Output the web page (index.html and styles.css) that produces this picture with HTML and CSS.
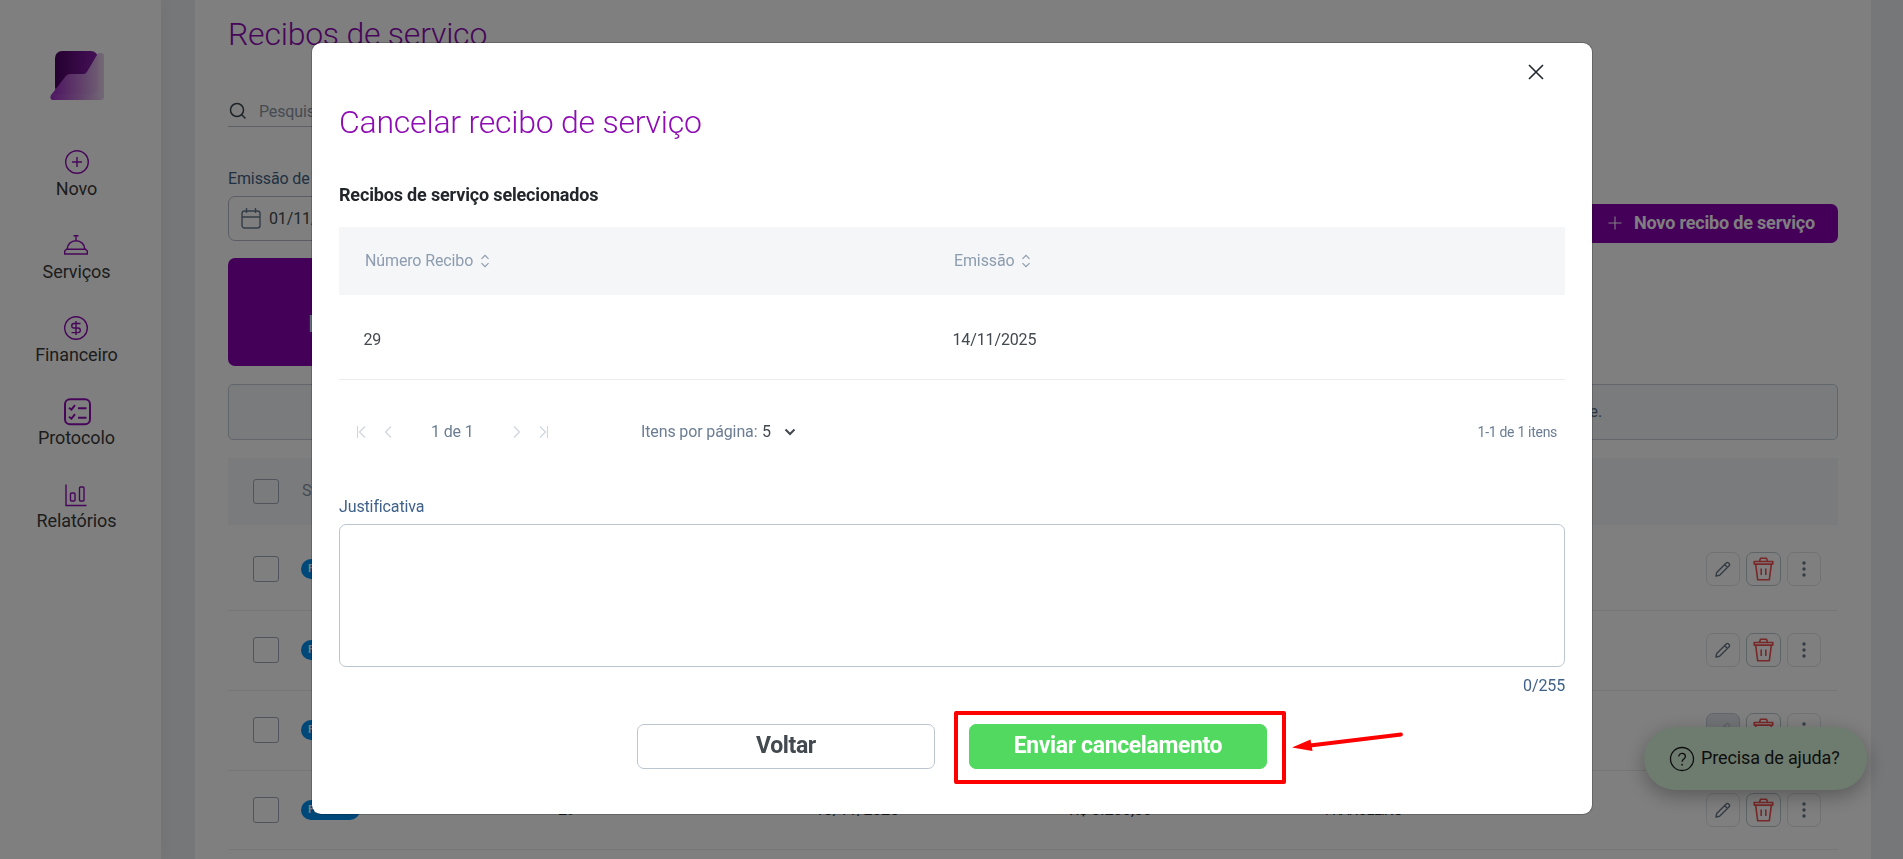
FILE: index.html
```html
<!DOCTYPE html>
<html lang="pt-BR">
<head>
<meta charset="utf-8">
<title>Recibos de serviço</title>
<link rel="stylesheet" href="styles.css">
</head>
<body>
<svg width="0" height="0" class="sprite">
  <symbol id="pencil" viewBox="0 0 16 16"><path d="M1 15l.7-3.6L11.2 1.9a1.6 1.6 0 0 1 2.3 0l.6.6a1.6 1.6 0 0 1 0 2.3L4.6 14.3zM9.6 3.6l2.8 2.8" fill="none" stroke="currentColor" stroke-width="1.4" stroke-linejoin="round"/></symbol>
  <symbol id="trash" viewBox="0 0 21 24"><path d="M1.2 4.5h18.600v2.600H1.200zM6.500 4.300l1-3h6l1 3M2.700 7.300l2 15.500h11.600l2-15.500M8.200 11.500v6.500M12.800 11.500v6.500" fill="none" stroke="currentColor" stroke-width="1.600" stroke-linejoin="round"/></symbol>
  <symbol id="dots" viewBox="0 0 4 16"><g fill="currentColor"><circle cx="2" cy="2" r="1.700"/><circle cx="2" cy="8" r="1.700"/><circle cx="2" cy="14" r="1.700"/></g></symbol>
  <symbol id="sort" viewBox="0 0 10 14"><path d="M1.500 4.800L5 1.300l3.500 3.500M1.500 9.200L5 12.700l3.500-3.500" fill="none" stroke="currentColor" stroke-width="1.200"/></symbol>
</svg>

<div class="app">
  <nav class="sidebar">
    <svg class="logo" width="54" height="51" viewBox="0 0 54 51">
      <defs>
        <linearGradient id="lg1" x1="0" x2="1"><stop offset="0" stop-color="#4a0060"/><stop offset="1" stop-color="#8a22ae"/></linearGradient>
        <linearGradient id="lg2" x1="0" x2="1"><stop offset="0" stop-color="#a030c8"/><stop offset=".5" stop-color="#c07ad4"/><stop offset="1" stop-color="#e6d2ec"/></linearGradient>
        <linearGradient id="lg3" x1="0" x2="1"><stop offset="0" stop-color="#9a2cc0"/><stop offset="1" stop-color="#d8b0e2"/></linearGradient>
      </defs>
      <rect x="5" y="1" width="43" height="43" rx="7" fill="url(#lg1)"/>
      <path d="M50 3h1q3 0 3 3v41q0 3-3 3H4Q-1 50 1 45L16 26q2-2 4-2h14q2 0 3-2L47 5q1-2 3-2z" fill="url(#lg2)"/>
      <path d="M47 6q1 1 1 3v28q0 7-7 7H5V41L16 26q2-2 4-2h14q2 0 3-2z" fill="url(#lg3)" opacity=".55"/>
    </svg>
    <a class="nav-item"><svg class="nav-icon" viewBox="0 0 28 28"><g fill="none" stroke="currentColor" stroke-width="1.400"><circle cx="14" cy="14" r="11.300"/><path d="M14 9v10M9 14h10"/></g></svg><span>Novo</span></a>
    <a class="nav-item"><svg class="nav-icon" viewBox="0 0 28 28"><g fill="none" stroke="currentColor" stroke-width="1.400"><path d="M5.200 18a8.800 8.300 0 0 1 17.600 0M14 9.700V5M11.500 4.800h5M4.500 18.300h19L25.300 20v3H2.700v-3z"/></g></svg><span>Serviços</span></a>
    <a class="nav-item"><svg class="nav-icon" viewBox="0 0 28 28"><g fill="none" stroke="currentColor" stroke-width="1.400"><circle cx="14" cy="14" r="11.300"/><path d="M18.500 9.500h-6.500a2.200 2.200 0 0 0 0 4.500h4a2.300 2.300 0 0 1 0 4.600H9.500M14 7v14"/></g></svg><span>Financeiro</span></a>
    <a class="nav-item"><svg class="nav-icon" viewBox="0 0 28 28"><g fill="none" stroke="currentColor" stroke-width="2"><rect x="2" y="1.200" width="25" height="25" rx="5"/><path d="M6 9.700l2.500 2L12 7.200M15 10.200h8.500M6 18.700l2.500 2L12 16.200M15 19.700h8.500"/></g></svg><span>Protocolo</span></a>
    <a class="nav-item"><svg class="nav-icon" viewBox="0 0 28 28"><g fill="none" stroke="currentColor" stroke-width="1.400"><path d="M4 3.500v21h20.500"/><rect x="8.500" y="12" width="4.500" height="8" rx="1"/><rect x="17.500" y="6" width="4.500" height="14" rx="1"/></g></svg><span>Relatórios</span></a>
  </nav>

  <main class="page">
    <h1 class="page-title">Recibos de serviço</h1>
    <div class="search">
      <svg width="18" height="18" viewBox="0 0 18 18"><g fill="none" stroke="currentColor" stroke-width="1.500"><circle cx="8" cy="8" r="6.500"/><path d="M12.500 12.500l4 4"/></g></svg>
      <span>Pesquisar</span>
    </div>
    <div class="filters">
      <div class="field">
        <span class="field-label">Emissão de</span>
        <div class="date-input">
          <svg width="20" height="21" viewBox="0 0 20 21"><g fill="none" stroke="currentColor" stroke-width="1.400"><rect x="1" y="3" width="18" height="17" rx="2.500"/><path d="M1 9h18M5.500 0v5M14.500 0v5"/></g></svg>
          <span>01/11/2025</span>
        </div>
      </div>
      <button class="new-button"><svg width="14" height="14" viewBox="0 0 14 14"><path d="M7 .5v13M.5 7h13" stroke="currentColor" stroke-width="1.100"/></svg>Novo recibo de serviço</button>
    </div>
    <div class="summary">Recibos</div>
    <div class="notice">Selecione os recibos que deseje.</div>
    <div class="grid-head"><i class="check"></i><span>Status</span></div>
    <div class="grid-row"><i class="check"></i><span class="pill">Faturado</span><span class="c1">32</span><span class="c2">14/11/2025</span><span class="c3">R$ 1.200,00</span><span class="c4">FRANCELINO</span><span class="actions"><b class="act"><svg width="16" height="16"><use href="#pencil"/></svg></b><b class="act del"><svg width="21" height="24"><use href="#trash"/></svg></b><b class="act"><svg width="4" height="16"><use href="#dots"/></svg></b></span></div>
    <div class="grid-row"><i class="check"></i><span class="pill">Faturado</span><span class="c1">31</span><span class="c2">14/11/2025</span><span class="c3">R$ 1.200,00</span><span class="c4">FRANCELINO</span><span class="actions"><b class="act"><svg width="16" height="16"><use href="#pencil"/></svg></b><b class="act del"><svg width="21" height="24"><use href="#trash"/></svg></b><b class="act"><svg width="4" height="16"><use href="#dots"/></svg></b></span></div>
    <div class="grid-row"><i class="check"></i><span class="pill">Faturado</span><span class="c1">30</span><span class="c2">14/11/2025</span><span class="c3">R$ 1.200,00</span><span class="c4">FRANCELINO</span><span class="actions"><b class="act off"><svg width="16" height="16"><use href="#pencil"/></svg></b><b class="act del"><svg width="21" height="24"><use href="#trash"/></svg></b><b class="act"><svg width="4" height="16"><use href="#dots"/></svg></b></span></div>
    <div class="grid-row last"><i class="check"></i><span class="pill">Faturado</span><span class="c1">29</span><span class="c2">13/11/2025</span><span class="c3">R$ 3.200,00</span><span class="c4">FRANCELINO</span><span class="actions"><b class="act"><svg width="16" height="16"><use href="#pencil"/></svg></b><b class="act del"><svg width="21" height="24"><use href="#trash"/></svg></b><b class="act"><svg width="4" height="16"><use href="#dots"/></svg></b></span></div>
  </main>
</div>

<div class="help">
  <svg width="26" height="26" viewBox="0 0 26 26"><g fill="none" stroke="currentColor" stroke-width="1.300"><circle cx="13" cy="13" r="11.500"/><path d="M9.800 10.500c0-4.200 6.600-4.200 6.600 0 0 2.500-3.300 2.500-3.300 5.300"/></g><circle cx="13.100" cy="18.700" r=".9" fill="currentColor"/></svg>
  <span>Precisa de ajuda?</span>
</div>

<div class="backdrop">
  <section class="modal">
    <svg class="close" width="16" height="16" viewBox="0 0 16 16"><path d="M1 1l14 14M15 1L1 15" stroke="currentColor" stroke-width="1.600"/></svg>
    <h2 class="modal-title">Cancelar recibo de serviço</h2>
    <h3 class="subtitle">Recibos de serviço selecionados</h3>
    <div class="thead"><span class="th">Número Recibo<svg width="10" height="14"><use href="#sort"/></svg></span><span class="th">Emissão<svg width="10" height="14"><use href="#sort"/></svg></span></div>
    <div class="trow"><span>29</span><span>14/11/2025</span></div>
    <div class="pager">
      <svg class="arrows" width="38" height="12" viewBox="0 0 38 12"><path d="M1.500 0v12M9 .5L3.500 6 9 11.500M35 .5L29.500 6l5.500 5.500" fill="none" stroke="currentColor" stroke-width="1.100"/></svg>
      <span class="pages">1 de 1</span>
      <svg class="arrows" width="38" height="12" viewBox="0 0 38 12"><path d="M36.500 0v12M29 .5L34.500 6 29 11.500M3 .5L8.500 6 3 11.500" fill="none" stroke="currentColor" stroke-width="1.100"/></svg>
      <span class="per">Itens por página:</span><span class="size">5</span>
      <svg class="chev" width="12" height="8" viewBox="0 0 12 8"><path d="M1.500 1.500L6 6l4.500-4.500" fill="none" stroke="currentColor" stroke-width="2"/></svg>
      <span class="count">1-1 de 1 itens</span>
    </div>
    <div class="label">Justificativa</div>
    <div class="textarea"></div>
    <div class="counter">0/255</div>
    <div class="buttons"><button class="btn">Voltar</button><button class="btn primary">Enviar cancelamento</button></div>
  </section>
</div>
<div class="highlight"></div>
<svg class="arrow" width="114" height="24" viewBox="0 0 114 24"><path d="M18 14.500L109 3.500" stroke="#f00" stroke-width="3.800" stroke-linecap="round"/><path d="M0 16.500L18.500 8.500 20.500 20z" fill="#f00"/></svg>
</body>
</html>
```
FILE: styles.css
```css
* { box-sizing: border-box; }
body { margin: 0; height: 859px; overflow: hidden; background: #edeff3; font: 16px/20px Roboto, sans-serif; letter-spacing: -.13px; color: #42494f; }
button, h1, h2, h3 { font: inherit; letter-spacing: inherit; margin: 0; }
svg { display: block; flex: none; }
.sprite { position: absolute; }
.app { display: flex; height: 859px; }

.sidebar { width: 161px; flex: none; background: #fff; box-shadow: 0 0 20px rgba(0,0,0,.06); display: flex; flex-direction: column; align-items: center; padding-right: 8px; }
.logo { margin: 50px 0 47px; }
.nav-item { display: flex; flex-direction: column; align-items: center; height: 83.200px; color: #8e0cb4; }
.nav-icon { width: 28px; height: 28px; }
.nav-item span { font-size: 18px; line-height: 24px; color: #3a3a3a; margin-top: .6px; letter-spacing: -.1px; }

.page { width: 1676px; margin-left: 34px; background: #fff; padding: 14px 33px 0; }
.page-title { font-size: 32px; line-height: 40px; font-weight: 300; letter-spacing: -.23px; color: #8e0cb4; }
.search { display: flex; align-items: center; gap: 12px; width: 400px; height: 31px; margin-top: 42px; padding: 0 0 0 1px; border-bottom: 1px solid #b9bfd0; color: #3c4650; }
.search span { color: #8a96a3; padding-top: 1px; }
.filters { display: flex; justify-content: space-between; align-items: flex-start; height: 131px; padding-top: 42px; }
.field { display: flex; flex-direction: column; gap: 7px; }
.field-label { color: #426285; }
.date-input { display: flex; align-items: center; gap: 8px; width: 190px; height: 45px; padding: 0 12px; border: 1px solid #b4bcc9; border-radius: 7px; color: #687a90; }
.date-input span { color: #42494f; }
.new-button { margin-top: 35px; width: 260px; height: 39px; border: 0; border-radius: 7px; background: #8800b2; color: #fff; display: flex; align-items: center; gap: 12px; padding: 0 0 2px 30px; font-size: 18px; font-weight: 700; letter-spacing: -.18px; white-space: nowrap; }
.summary { width: 390px; height: 108px; border-radius: 7px; background: #8800b2; color: #dfe9f7; font-size: 24px; padding: 56px 0 0 80px; }
.notice { height: 56px; margin-top: 18px; border: 1px solid #c0ccd8; border-radius: 5px; background: #f5f7fa; color: #5f7286; text-align: right; padding: 17px 235px 0 0; }
.grid-head { height: 67px; margin: 18px 0 5px; background: #f5f6f8; display: flex; align-items: center; padding: 0 0 1px 25px; color: #8796a7; }
.check { width: 26px; height: 26px; border: 1px solid #a0a8b8; border-radius: 3px; margin-right: 22px; flex: none; }
.grid-head .check { height: 25px; margin-right: 23px; }
.grid-row { height: 80px; border-bottom: 1px solid #ececec; display: flex; align-items: center; padding: 0 17px 1px 25px; color: #2c3338; }
.grid-head + .grid-row { height: 81px; padding-bottom: 2px; }
.last { height: 79px; padding-bottom: 0; }
.pill { width: 59px; height: 20px; border-radius: 10px; background: #0090f5; color: #fff; font-size: 11px; font-weight: 600; padding-left: 7px; overflow: hidden; }
.c1 { width: 257px; margin-left: 198px; }
.c2 { width: 254px; }
.c3 { width: 256px; }
.c4 { font-size: 14px; letter-spacing: -.6px; }
.actions { display: flex; align-items: center; gap: 6px; margin-left: auto; }
.act { width: 34px; height: 34px; border: 1px solid #dfe3e6; border-radius: 7px; display: flex; align-items: center; justify-content: center; color: #687888; }
.del { width: 35px; color: #f05050; border-color: #b9c9cc; }
.off { background: #e3e6ec; color: #c0c6d0; border-color: #c6ccd4; }

.help { position: absolute; left: 1644px; top: 727px; width: 223px; height: 63px; border-radius: 32px; background: #dcf8de; box-shadow: 0 6px 20px rgba(0,0,0,.3); color: #1c1c1c; display: flex; align-items: center; gap: 6px; padding: 0 0 0 25px; font-size: 18px; }
.help span { padding-bottom: 2px; }

.backdrop { position: fixed; inset: 0; background: rgba(0,0,0,.5); display: flex; justify-content: center; align-items: flex-start; padding-top: 42px; }
.modal { width: 1282px; height: 773px; flex: none; background: #fff; background-clip: padding-box; border: 1px solid rgba(0,0,0,.2); border-radius: 10px; padding: 21px 27px 0; position: relative; left: .5px; }
.close { margin-left: auto; margin-right: 21px; color: #22262e; }
.modal-title { margin-top: 21px; font-size: 32px; line-height: 42px; font-weight: 300; letter-spacing: -.23px; color: #8e0cb4; }
.subtitle { margin-top: 39px; height: 45px; font-size: 18px; line-height: 26px; font-weight: 700; letter-spacing: -.16px; color: #22262a; }
.thead { height: 68px; background: #f5f6f8; display: grid; grid-template-columns: 589px 1fr; align-items: center; padding-left: 26px; color: #8d9caf; }
.th { display: flex; align-items: center; gap: 7px; }
.trow { height: 85px; border-bottom: 1px solid #ececee; display: grid; grid-template-columns: 589px 1fr; align-items: center; padding: 6px 0 0 24.500px; }
.pager { height: 104px; display: flex; align-items: center; color: #6b7d93; padding: 0 8px 0 17px; }
.pager span { padding-bottom: 1px; }
.arrows { color: #cdd4dc; }
.pages { width: 117px; padding-left: 37px; }
.per { margin-left: 92px; width: 121px; white-space: nowrap; }
.size { width: 22px; color: #42494f; }
.chev { color: #42494f; }
.count { margin-left: auto; font-size: 14px; letter-spacing: -.3px; }
.label { height: 40px; padding-top: 13px; color: #3f6189; }
.textarea { height: 143px; border: 1px solid #bcc6d1; border-radius: 7px; }
.counter { height: 57px; padding-top: 9px; text-align: right; color: #3f6189; }
.buttons { display: flex; justify-content: center; gap: 34px; }
.btn { width: 298px; height: 45px; border: 1px solid #bcc6d1; border-radius: 7px; background: #fff; color: #42494f; font-size: 23px; font-weight: 700; letter-spacing: -.38px; padding: 0 0 1px; }
.primary { background: #52da60; border-color: #52da60; color: #fff; }

.highlight { position: absolute; left: 954px; top: 711px; width: 332px; height: 73px; border: 4px solid #f00; border-radius: 2px; }
.arrow { position: absolute; left: 1292px; top: 731px; }
```
